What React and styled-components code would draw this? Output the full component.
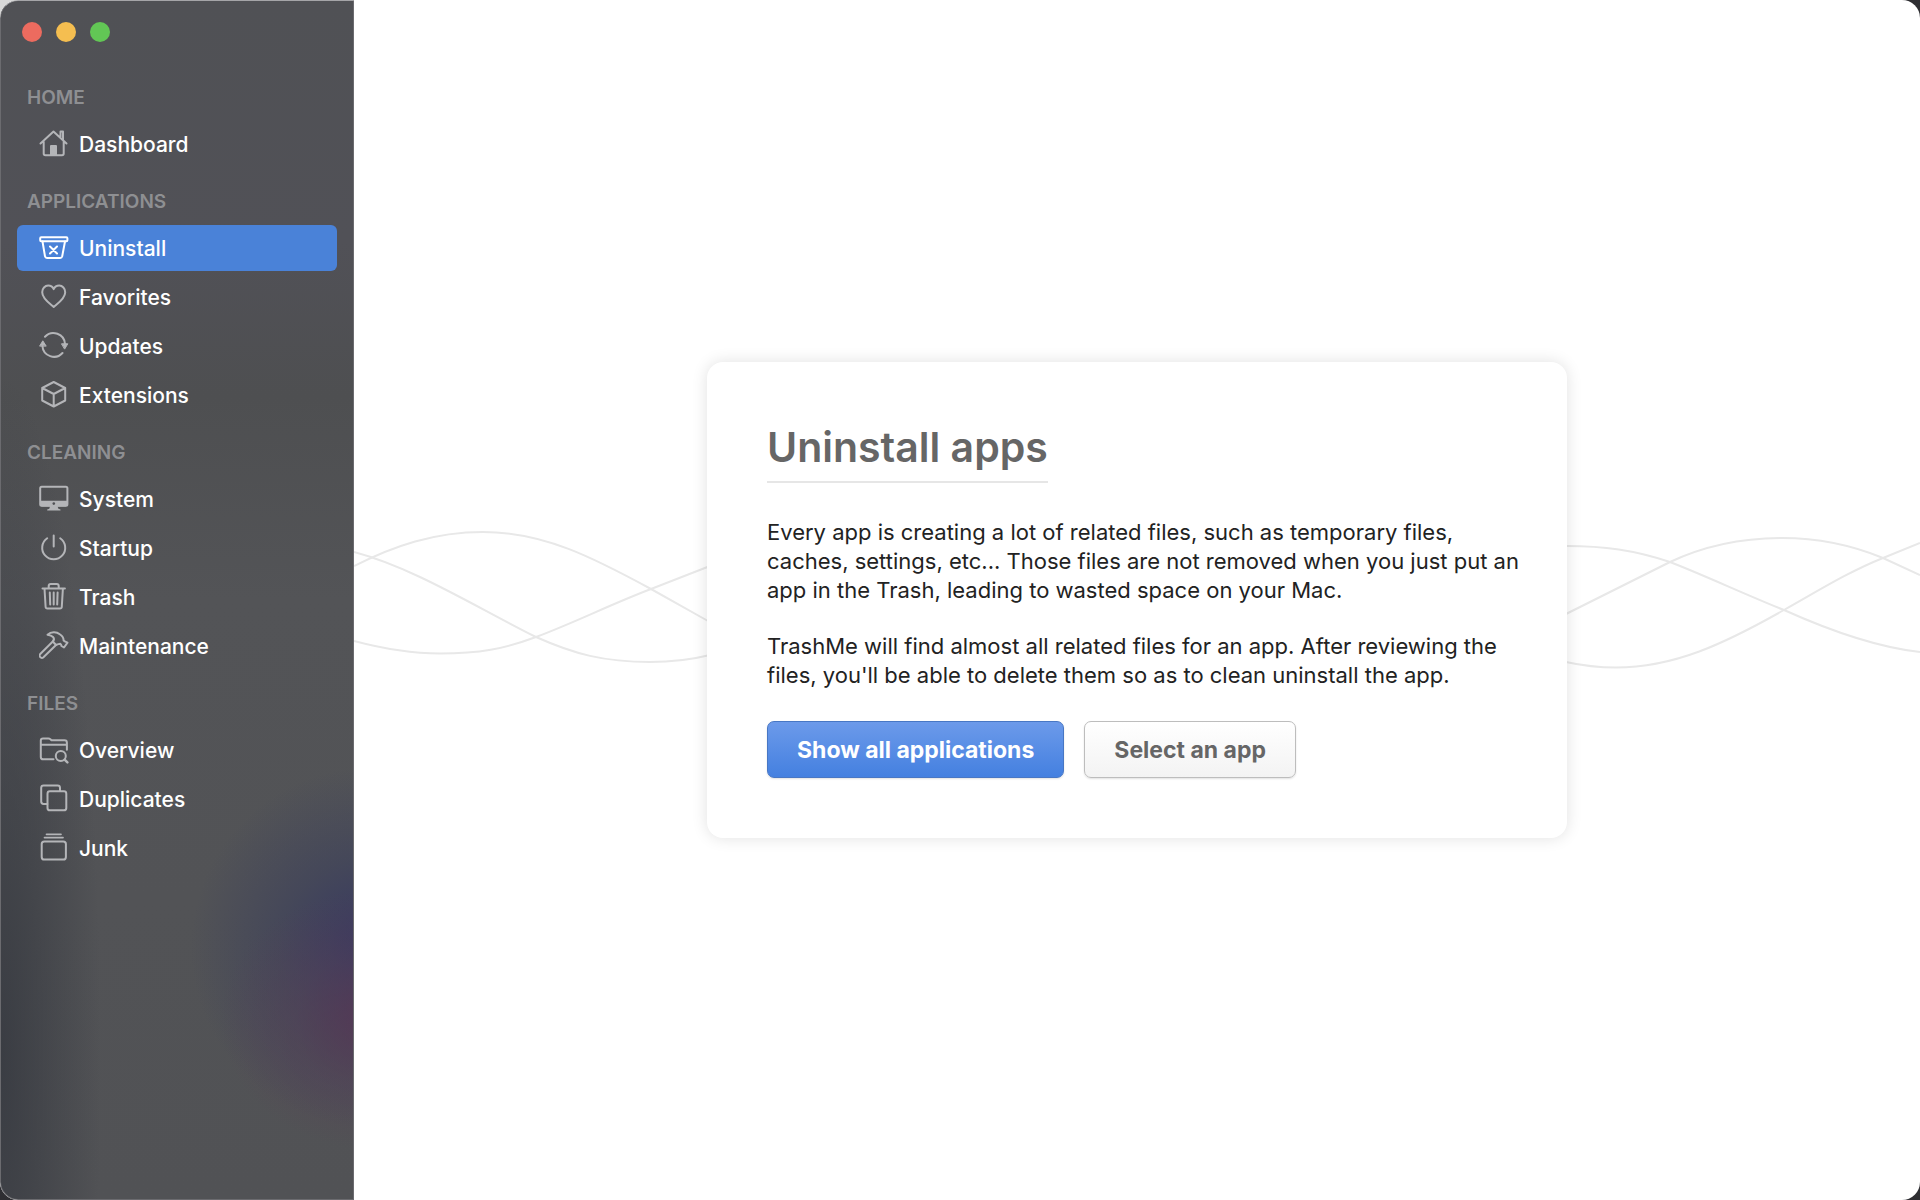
import React, { useState } from "react";
import styled, { createGlobalStyle, css } from "styled-components";

const GlobalStyle = createGlobalStyle`
	* {
		box-sizing: border-box;
	}

	body {
		margin: 0;
		background:
			radial-gradient(circle at 0 0, #d8d8d8 0, #d8d8d8 12px, transparent 24px),
			#2e2e32;
		font-family: Inter, "Liberation Sans", sans-serif;
		-webkit-font-smoothing: antialiased;
	}
`;

const Window = styled.div`
	display: flex;
	min-height: 100vh;
	border-radius: 18px;
	overflow: hidden;
	background: #fff;
`;

/* Sidebar */

const Sidebar = styled.aside`
	flex: 0 0 354px;
	border: 1px solid #6b6b6f;
	border-top-color: #a5a5a8;
	border-radius: 18px 0 0 18px;
	padding: 0 16px 24px;
	background:
		radial-gradient(
			ellipse 150px 130px at 105% 85%,
			rgba(88, 54, 84, 0.8),
			rgba(88, 62, 86, 0.4) 50%,
			transparent
		),
		radial-gradient(
			ellipse 180px 180px at 105% 79%,
			rgba(52, 54, 98, 0.95),
			rgba(58, 62, 92, 0.55) 50%,
			transparent
		),
		radial-gradient(ellipse 100px 680px at 0 88%, rgba(54, 57, 64, 0.85), transparent),
		linear-gradient(#505155, #515157 20%, #4e4f51 33%, #535457 50%, #515255);
`;

const TitleBar = styled.div`
	display: flex;
	align-items: center;
	gap: 14px;
	height: 62px;
	padding-left: 5px;
`;

const TrafficLight = styled.button`
	width: 20px;
	height: 20px;
	padding: 0;
	border: none;
	border-radius: 50%;
	background: ${(props) => props.$color};
`;

const SectionTitle = styled.h2`
	margin: 0;
	padding: 24px 10px 12px;
	font-size: 19px;
	font-weight: 600;
	line-height: 22px;
	color: #8e8f92;
	text-transform: uppercase;
`;

const NavList = styled.ul`
	display: flex;
	flex-direction: column;
	gap: 3px;
	margin: 0;
	padding: 0;
	list-style: none;
`;

const NavLink = styled.a`
	display: flex;
	align-items: center;
	gap: 10px;
	height: 46px;
	padding: 0 22px;
	border-radius: 6px;
	font-size: 21px;
	font-weight: 500;
	color: #fff;
	text-decoration: none;

	svg {
		flex: none;
		color: #b4b5b8;
	}

	${(props) =>
		props.$active &&
		css`
			background: #4a82d8;

			svg {
				color: #fff;
			}
		`}
`;

/* Main area */

const Main = styled.main`
	flex: 1;
	display: grid;
	place-items: center;
	position: relative;
`;

const Waves = styled.svg`
	position: absolute;
	left: 0;
	top: 50%;
	width: 100%;
	height: 200px;
	margin-top: -100px;
	fill: none;
	stroke: #e8e8e8;
	stroke-width: 2;
`;

const Card = styled.section`
	position: relative;
	width: 55%;
	min-width: 640px;
	max-width: 860px;
	padding: 59px 44px 60px 60px;
	border-radius: 16px;
	background: #fff;
	box-shadow: 0 0 16px rgba(0, 0, 0, 0.12);
`;

const Title = styled.h1`
	width: fit-content;
	margin: 0 0 35px;
	padding-bottom: 8px;
	border-bottom: 2px solid #e6e6e6;
	font-size: 41px;
	font-weight: 600;
	line-height: 52px;
	color: #666;
`;

const Text = styled.p`
	margin: 0 0 27px;
	font-size: 22px;
	line-height: 29px;
	color: #222;
`;

const Actions = styled.div`
	display: flex;
	gap: 20px;
	margin-top: 31px;
`;

const Button = styled.button`
	height: 57px;
	padding: 0 29px;
	border: 1px solid #bdbdbd;
	border-radius: 7px;
	background: linear-gradient(#fff, #f3f3f3);
	box-shadow: 0 1px 2px rgba(0, 0, 0, 0.12);
	font-family: inherit;
	font-size: 23px;
	font-weight: 700;
	color: #666;

	${(props) =>
		props.$primary &&
		css`
			border-color: #4877c4;
			background: linear-gradient(#6c9aea, #4480e0);
			color: #fff;
		`}
`;

const Icon = ({ children }) => (
	<svg
		width="30"
		height="30"
		viewBox="0 0 30 30"
		fill="none"
		stroke="currentColor"
		strokeWidth="2"
		strokeLinecap="round"
		strokeLinejoin="round"
		aria-hidden="true"
	>
		{children}
	</svg>
);

const icons = {
	dashboard: (
		<Icon>
			<path d="M1.5 14.5 14.5 2.5l13 12M21.5 8V2.5H24v8M4.7 12.5V24.5q0 1.7 1.7 1.7H23q1.7 0 1.7-1.7V12.5" />
			<path d="M11 26V17q0-1 1-1h5q1 0 1 1v9z" fill="currentColor" stroke="none" />
		</Icon>
	),
	uninstall: (
		<Icon>
			<rect x="1.2" y="4.3" width="27.2" height="4" rx="1" />
			<path d="M3.5 8.5 6 23.3q.4 1.7 2 1.7h13.2q1.6 0 2-1.7L26 8.5M11 13.5l7 7m0-7-7 7" />
		</Icon>
	),
	favorites: (
		<Icon>
			<path d="M14.7 25C11 21.8 3.2 16.8 3.2 10.3 3.2 6.3 6 3.6 9.2 3.6c2.5 0 4.5 1.3 5.5 3.5 1-2.2 3-3.5 5.5-3.5 3.2 0 6 2.7 6 6.7C26.2 16.8 18.4 21.8 14.7 25z" />
		</Icon>
	),
	updates: (
		<Icon>
			<path d="M6 5.7A11.6 11.6 0 0 1 26 13M3.4 15A11.6 11.6 0 0 0 23.5 22" />
			<path d="m.8 14.8 3-5 3.2 5zM22.8 12.8h6l-3 5z" fill="currentColor" strokeWidth="1" />
		</Icon>
	),
	extensions: (
		<Icon>
			<path d="M14.7 2 26.2 8v12.5L14.7 26.5 3.2 20.5V8zM3.2 8l11.5 6 11.5-6M14.7 14v12.5" />
		</Icon>
	),
	system: (
		<Icon>
			<rect x="1.2" y="2.8" width="27.2" height="19" rx="1.5" />
			<path
				d="M1.2 16.7h27.2v4q0 1.8-1.8 1.8H3q-1.8 0-1.8-1.8zM11 22.5h7.6l.8 2.3 2.1.8v.9H8.2v-.9l2.1-.8z"
				fill="currentColor"
				stroke="none"
			/>
			<circle cx="14.8" cy="19.6" r="1.3" fill="#505155" stroke="none" />
		</Icon>
	),
	startup: (
		<Icon>
			<path d="M14.7 2.5v11M8.2 5.2a11.5 11.5 0 1 0 13 0" />
		</Icon>
	),
	trash: (
		<Icon>
			<path d="M3.5 6.5h22.4M9.7 6.5V4q0-2 2-2h6q2 0 2 2v2.5M5.5 6.5 6.6 24.7q.1 1.8 1.9 1.8h12.4q1.8 0 1.9-1.8L23.9 6.5M10.8 10.5l.4 12M14.7 10.5v12M18.6 10.5l-.4 12" />
		</Icon>
	),
	maintenance: (
		<Icon>
			<path d="M13.8 10.5 1 23.3q-1 1.2 0 2.4l.8.8q1.2 1 2.4 0L17 14" />
			<path d="M13.8 10.5q2.2-2.4.2-4.6-1.6-1.5-5.5-2.2C12 .6 17.5.6 20.8 3.2q4 2.8 3.8 6.3l1.2.9 2.7 1.2-3.5 4.9-2.6-1.5q0-1.7-1-2.2-2 .2-4.4 1.2z" />
		</Icon>
	),
	overview: (
		<Icon>
			<path d="M14.5 24.3H4.2q-2.4 0-2.4-2.4V5.6q0-2.2 2.2-2.2h5.5q1 0 1.6.6l1.4 1.3h13q2.4 0 2.4 2.4v7M1.8 9.8h26" />
			<circle cx="21.8" cy="21" r="5" />
			<path d="m25.6 24.6 2.8 2.8" strokeWidth="2.4" />
		</Icon>
	),
	duplicates: (
		<Icon>
			<rect x="8.5" y="7.3" width="18.8" height="19" rx="2.4" />
			<path d="M8.3 20H4.6q-2.4 0-2.4-2.4V3.8q0-2.4 2.4-2.4h14q2.4 0 2.4 2.4V7" />
		</Icon>
	),
	junk: (
		<Icon>
			<rect x="2.7" y="8.5" width="24.2" height="18" rx="2.6" />
			<path d="M7.5 1.3h14.5M5.5 4.6h18.5" strokeWidth="1.7" />
		</Icon>
	),
};

const sections = [
	{ title: "Home", items: ["Dashboard"] },
	{ title: "Applications", items: ["Uninstall", "Favorites", "Updates", "Extensions"] },
	{ title: "Cleaning", items: ["System", "Startup", "Trash", "Maintenance"] },
	{ title: "Files", items: ["Overview", "Duplicates", "Junk"] },
];

const App = () => {
	const [current, setCurrent] = useState("uninstall");

	return (
		<>
			<GlobalStyle />
			<Window>
				<Sidebar>
					<TitleBar>
						<TrafficLight $color="#ec6b5f" aria-label="Close" />
						<TrafficLight $color="#f5be50" aria-label="Minimize" />
						<TrafficLight $color="#62c655" aria-label="Zoom" />
					</TitleBar>
					<nav>
						{sections.map(({ title, items }) => (
							<section key={title}>
								<SectionTitle>{title}</SectionTitle>
								<NavList>
									{items.map((item) => {
										const id = item.toLowerCase();
										return (
											<li key={id}>
												<NavLink
													href={`#${id}`}
													$active={current === id}
													onClick={() => setCurrent(id)}
												>
													{icons[id]}
													{item}
												</NavLink>
											</li>
										);
									})}
								</NavList>
							</section>
						))}
					</nav>
				</Sidebar>
				<Main>
					<Waves viewBox="0 0 1566 200" preserveAspectRatio="none" aria-hidden="true">
						<path d="M0 66C40 46 80 32 129 32C190 32 240 58 297 89L354 121" />
						<path d="M0 52C60 68 120 106 182 137C220 154 250 162 296 162C318 162 336 160 356 155" />
						<path d="M0 141C30 149 55 153.5 86 153.5C125 153.5 150 149 182 137C222 122 255 105 297 89L356 66" />
						<path d="M1212 46C1250 46 1280 50 1316 62C1352 76 1390 94 1430 110C1470 128 1520 147 1566 152" />
						<path d="M1212 114L1316 62C1350 46 1386 38 1428 38C1464 38 1500 46 1529 58L1566 75" />
						<path d="M1212 162C1230 166 1244 167.5 1262 167.5C1320 167.5 1370 144 1430 110C1464 91 1494 72 1529 58L1566 43" />
					</Waves>
					<Card>
						<Title>Uninstall apps</Title>
						<Text>
							Every app is creating a lot of related files, such as temporary files, caches, settings,
							etc... Those files are not removed when you just put an app in the Trash, leading to
							wasted space on your Mac.
						</Text>
						<Text>
							TrashMe will find almost all related files for an app. After reviewing the files, you'll
							be able to delete them so as to clean uninstall the app.
						</Text>
						<Actions>
							<Button $primary>Show all applications</Button>
							<Button>Select an app</Button>
						</Actions>
					</Card>
				</Main>
			</Window>
		</>
	);
};

export default App;
